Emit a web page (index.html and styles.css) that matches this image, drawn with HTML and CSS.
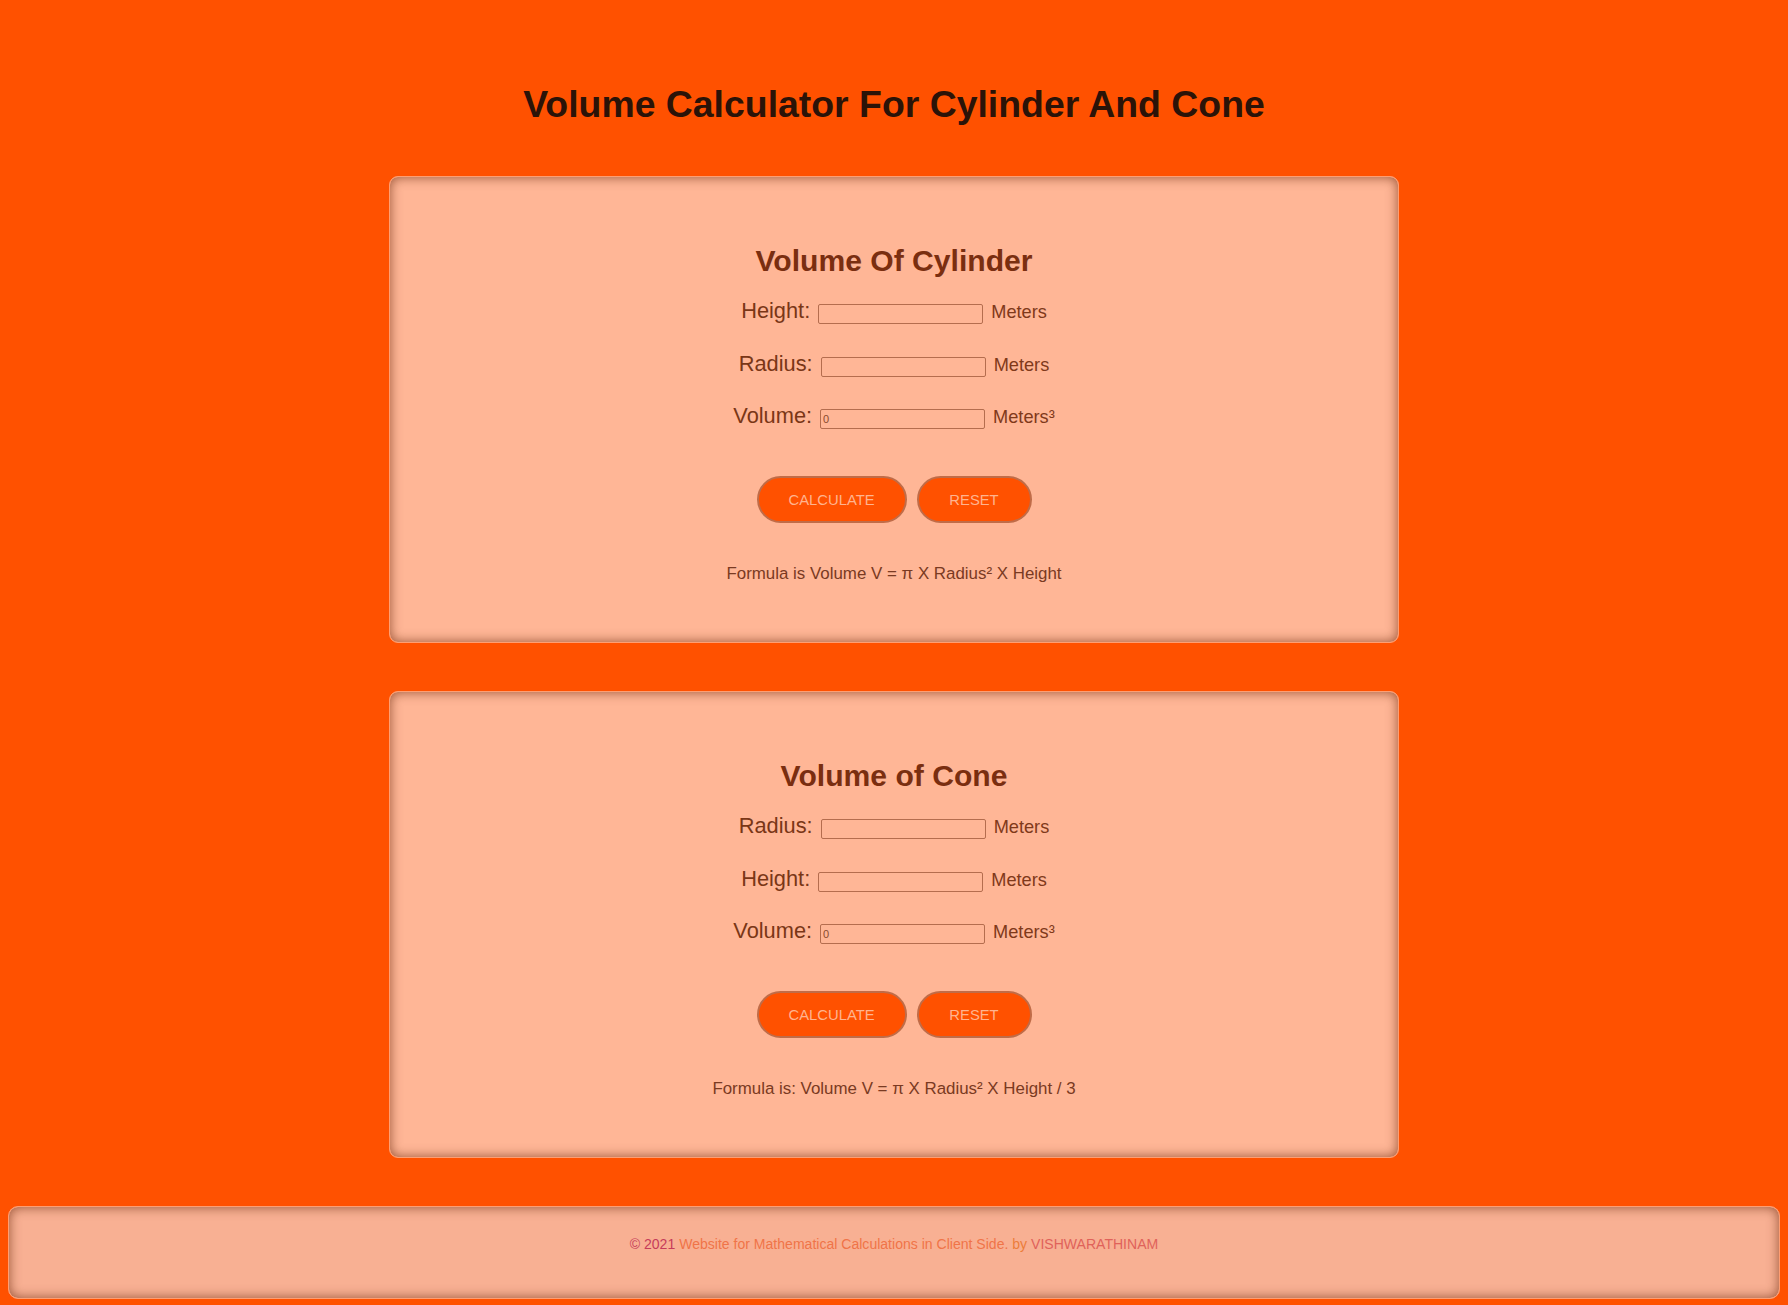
FILE: index.html
```html
<!DOCTYPE html>
<html lang="en">
<head>
<meta charset="utf-8">
<title>Volume Calculator For Cylinder And Cone</title>
<link rel="stylesheet" href="styles.css">
</head>
<body>
  <header class="page-header">
    <h1 class="page-title">Volume Calculator For Cylinder And Cone</h1>
  </header>
  <main class="cards">
    <section class="card">
      <h2 class="card-title">Volume Of Cylinder</h2>
      <div class="rows">
        <div class="row"><span class="label">Height:</span><input class="field" type="text"><span class="unit">Meters</span></div>
        <div class="row"><span class="label">Radius:</span><input class="field" type="text"><span class="unit">Meters</span></div>
        <div class="row"><span class="label">Volume:</span><input class="field" type="text" value="0"><span class="unit">Meters³</span></div>
      </div>
      <div class="actions">
        <button class="btn btn-calc" type="button">CALCULATE</button>
        <button class="btn btn-reset" type="button">RESET</button>
      </div>
      <p class="formula">Formula is Volume V = π X Radius² X Height</p>
    </section>
    <section class="card">
      <h2 class="card-title">Volume of Cone</h2>
      <div class="rows">
        <div class="row"><span class="label">Radius:</span><input class="field" type="text"><span class="unit">Meters</span></div>
        <div class="row"><span class="label">Height:</span><input class="field" type="text"><span class="unit">Meters</span></div>
        <div class="row"><span class="label">Volume:</span><input class="field" type="text" value="0"><span class="unit">Meters³</span></div>
      </div>
      <div class="actions">
        <button class="btn btn-calc" type="button">CALCULATE</button>
        <button class="btn btn-reset" type="button">RESET</button>
      </div>
      <p class="formula">Formula is: Volume V = π X Radius² X Height / 3</p>
    </section>
  </main>
  <footer class="footer">
    <p class="footer-text"><span class="f-copy">© 2021</span> <span class="f-site">Website for Mathematical Calculations in Client Side.</span> <span class="f-by">by</span> <span class="f-name">VISHWARATHINAM</span></p>
  </footer>
</body>
</html>
```
FILE: styles.css
```css
* { box-sizing: border-box; }

html, body {
  margin: 0;
  padding: 0;
  background: #ff5100;
}

body {
  font-family: "Liberation Sans", Arial, sans-serif;
  padding: 0 8px 7px;
}

.page-header {
  padding-top: 83px;
  text-align: center;
}

.page-title {
  margin: 0;
  font-size: 37.4px;
  line-height: 42px;
  font-weight: 700;
  color: #2b1308;
}

.cards {
  display: flex;
  flex-direction: column;
  align-items: center;
  gap: 48px;
  margin-top: 51px;
}

.card {
  width: 1010px;
  display: flex;
  flex-direction: column;
  align-items: center;
  padding: 67px 20px 58px;
  background: #ffb696;
  border: 1px solid #ff9e72;
  border-radius: 9px;
  box-shadow: inset 0 0 12px rgba(100, 35, 8, 0.68);
}

.card-title {
  margin: 0;
  font-size: 30.1px;
  line-height: 34px;
  font-weight: 700;
  color: #7a2e10;
}

.rows {
  display: flex;
  flex-direction: column;
  align-items: center;
  gap: 26.5px;
  margin-top: 20px;
}

.row {
  display: flex;
  align-items: baseline;
  gap: 8px;
}

.label {
  font-size: 21.8px;
  color: #7a3616;
}

.unit {
  font-size: 18.2px;
  color: #80391a;
}

.field {
  width: 165px;
  height: 20px;
  padding: 0 2px;
  border: 1px solid #b56d4e;
  border-radius: 2px;
  background: transparent;
  font-family: "Liberation Sans", Arial, sans-serif;
  font-size: 11px;
  color: #8a4a2e;
}

.actions {
  display: flex;
  gap: 10px;
  margin-top: 47px;
}

.btn {
  height: 47px;
  padding: 0 30px;
  border: 2px solid #c06c48;
  border-radius: 24px;
  background: #ff5100;
  color: #ffb48f;
  font-family: "Liberation Sans", Arial, sans-serif;
  font-size: 14.8px;
}

.btn-calc { width: 150px; }
.btn-reset { width: 115px; }

.formula {
  margin: 41px 0 0;
  font-size: 16.9px;
  line-height: 20px;
  color: #7a3a22;
}

.footer {
  margin-top: 48px;
  height: 93px;
  padding-top: 29px;
  background: #f8b093;
  border: 1px solid #ff9e72;
  border-radius: 10px;
  box-shadow: inset 0 0 12px rgba(100, 35, 8, 0.68);
  text-align: center;
}

.footer-text {
  margin: 0;
  font-size: 14.05px;
  line-height: 16px;
}

.f-copy { color: #c63c5a; }
.f-site { color: #f07448; }
.f-by { color: #ec7d3a; }
.f-name { color: #e0625a; }
```
